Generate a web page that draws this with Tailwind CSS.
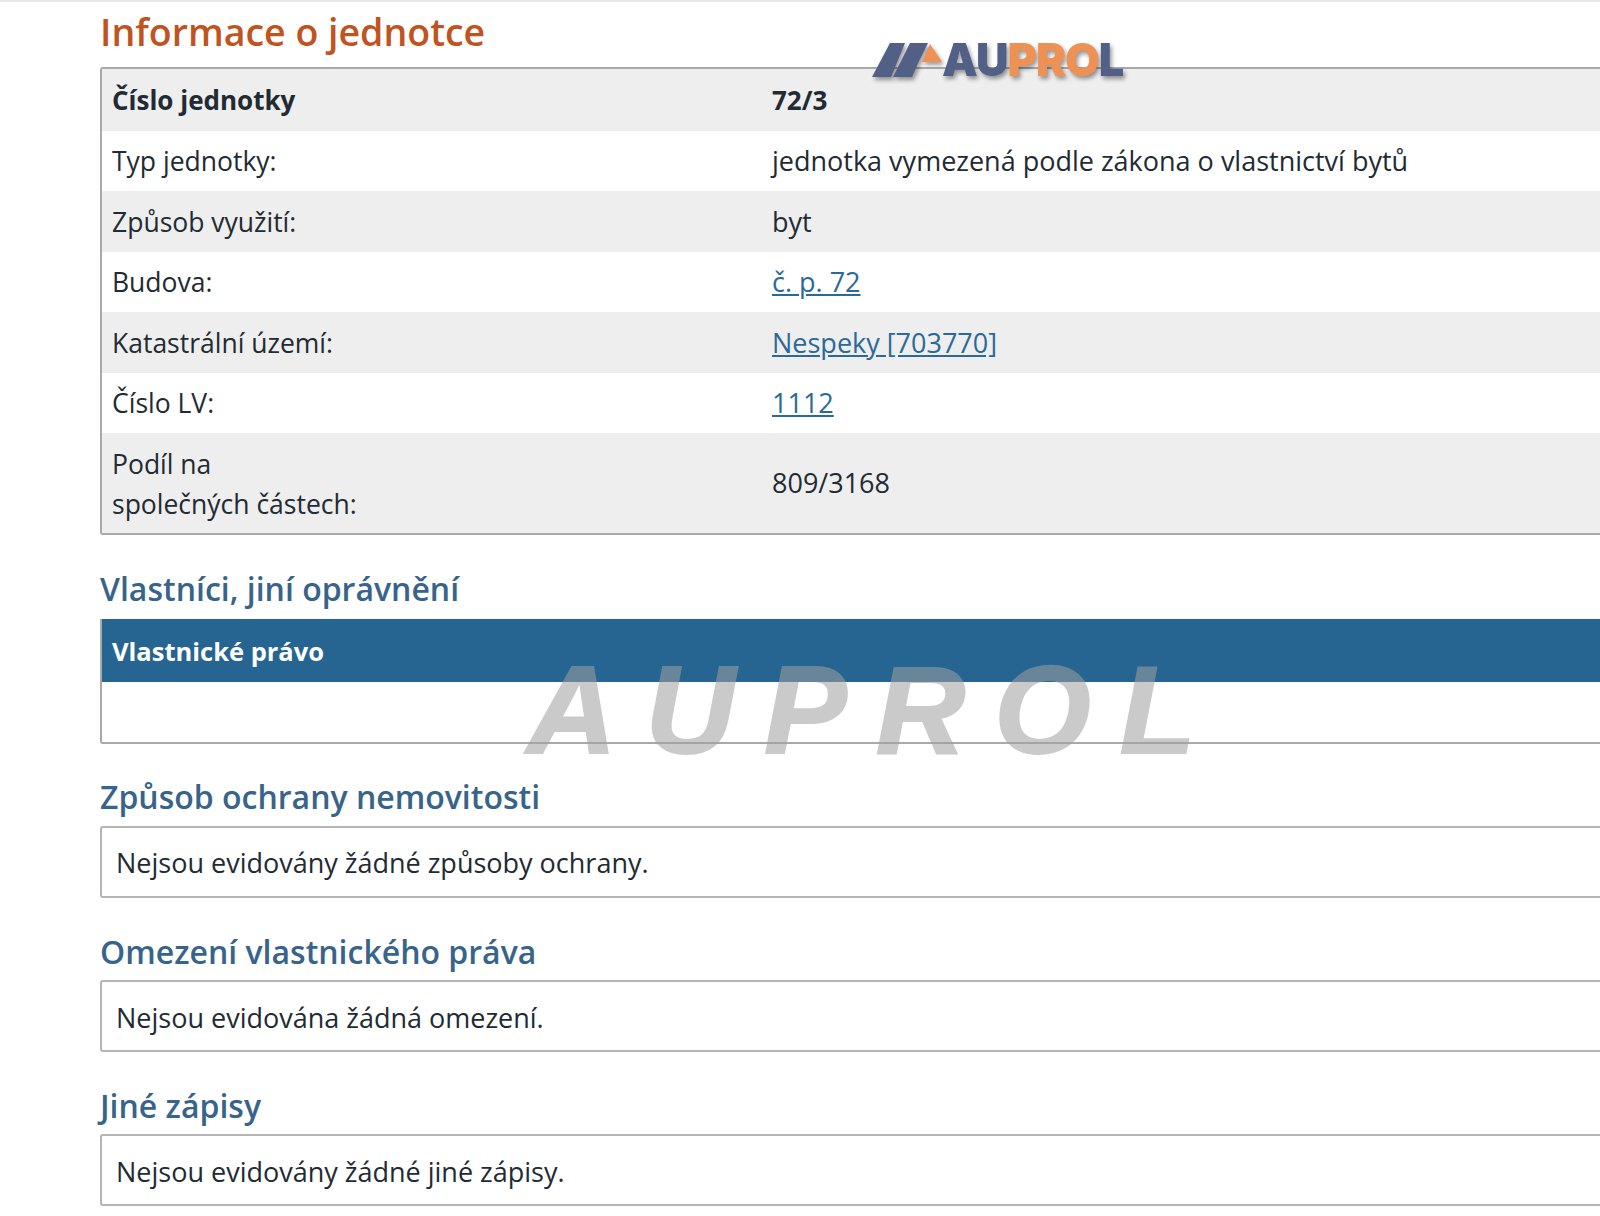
<!DOCTYPE html>
<html lang="cs"><head>
<meta charset="UTF-8">
<title>Informace o jednotce</title>
<script src="https://cdn.jsdelivr.net/npm/@tailwindcss/browser@4"></script>
</head>
<body class="relative h-[1216px] w-[1600px] overflow-hidden bg-white font-['Open_Sans',sans-serif] text-[27px] leading-[40px] text-[#222b33]">

<div class="border-t-2 border-[#e8e8e8] pl-[100px]">

  <h1 class="h-[65px] pt-[8px] text-[37.5px] leading-[44px] font-semibold text-[#c1531f]">Informace o jednotce</h1>

  <!-- jednotka -->
  <table class="w-full border-separate border-spacing-0 rounded-l-[3px] border-2 border-r-0 border-[#a9a9a9]">
    <tbody>
      <tr class="h-[62px] bg-[#eeeeee] text-[26px] font-bold"><td class="w-[670px] pl-[10px]">Číslo jednotky</td><td>72/3</td></tr>
      <tr class="h-[60px]"><td class="pl-[10px] text-[26.5px]">Typ jednotky:</td><td>jednotka vymezená podle zákona o vlastnictví bytů</td></tr>
      <tr class="h-[61px] bg-[#eeeeee]"><td class="pl-[10px] text-[26.5px]">Způsob využití:</td><td>byt</td></tr>
      <tr class="h-[60px]"><td class="pl-[10px] text-[26.5px]">Budova:</td><td><a href="#" class="text-[#2b6a98] underline">č. p. 72</a></td></tr>
      <tr class="h-[61px] bg-[#eeeeee]"><td class="pl-[10px] text-[26.5px]">Katastrální území:</td><td><a href="#" class="text-[#2b6a98] underline">Nespeky [703770]</a></td></tr>
      <tr class="h-[60px]"><td class="pl-[10px] text-[26.5px]">Číslo LV:</td><td><a href="#" class="text-[#2b6a98] underline">1112</a></td></tr>
      <tr class="h-[100px] bg-[#eeeeee]"><td class="pt-[2px] pl-[10px] text-[26.5px]">Podíl na<br>společných částech:</td><td>809/3168</td></tr>
    </tbody>
  </table>

  <h2 class="mt-[33px] mb-[9px] text-[32px] leading-[42px] font-semibold text-[#38648c]">Vlastníci, jiní oprávnění</h2>
  <div class="rounded-bl-[3px] border-b-2 border-l-2 border-[#a9a9a9]">
    <div class="flex h-[63px] items-center bg-[#266492] pl-[10px] text-[25.5px] font-bold text-white">Vlastnické právo</div>
    <div class="h-[60px]"></div>
  </div>

  <h2 class="mt-[32px] mb-[8px] text-[32px] leading-[42px] font-semibold text-[#38648c]">Způsob ochrany nemovitosti</h2>
  <div class="flex h-[72px] items-center rounded-l-[3px] border-2 border-r-0 border-[#b5b5b5] pt-[2px] pl-[14px]">Nejsou evidovány žádné způsoby ochrany.</div>

  <h2 class="mt-[33px] mb-[7px] text-[32px] leading-[42px] font-semibold text-[#38648c]">Omezení vlastnického práva</h2>
  <div class="flex h-[72px] items-center rounded-l-[3px] border-2 border-r-0 border-[#b5b5b5] pt-[3px] pl-[14px]">Nejsou evidována žádná omezení.</div>

  <h2 class="mt-[33px] mb-[7px] text-[32px] leading-[42px] font-semibold text-[#38648c]">Jiné zápisy</h2>
  <div class="flex h-[72px] items-center rounded-l-[3px] border-2 border-r-0 border-[#b5b5b5] pt-[3px] pl-[14px]">Nejsou evidovány žádné jiné zápisy.</div>
</div>

<!-- logo -->
<div class="absolute left-[872px] top-[42px] flex h-[36px] items-center drop-shadow-[2px_3px_2px_rgba(0,0,0,0.4)]">
  <svg width="70" height="36" viewBox="0 0 70 36" class="shrink-0">
    <path d="M18 1H33L19 35H0Z M38 1H56L46 21L40 35H21Z" fill="#525f86"/>
    <path d="M58 2L70 20H50Z" fill="#ee9155"/>
  </svg>
  <span class="font-['Inter',sans-serif] text-[45px] leading-[36px] font-black tracking-[-1px] text-[#525f86]">AU<span class="text-[#ee9155]">PRO</span>L</span>
</div>

<!-- vodoznak -->
<div class="absolute left-[527px] top-[640px] font-['Liberation_Sans',sans-serif] text-[124px] leading-[140px] font-bold tracking-[29px] whitespace-nowrap text-[#a0a0a0] italic opacity-55 [-webkit-text-stroke:2px_#a0a0a0]">AUPROL</div>

</body></html>
